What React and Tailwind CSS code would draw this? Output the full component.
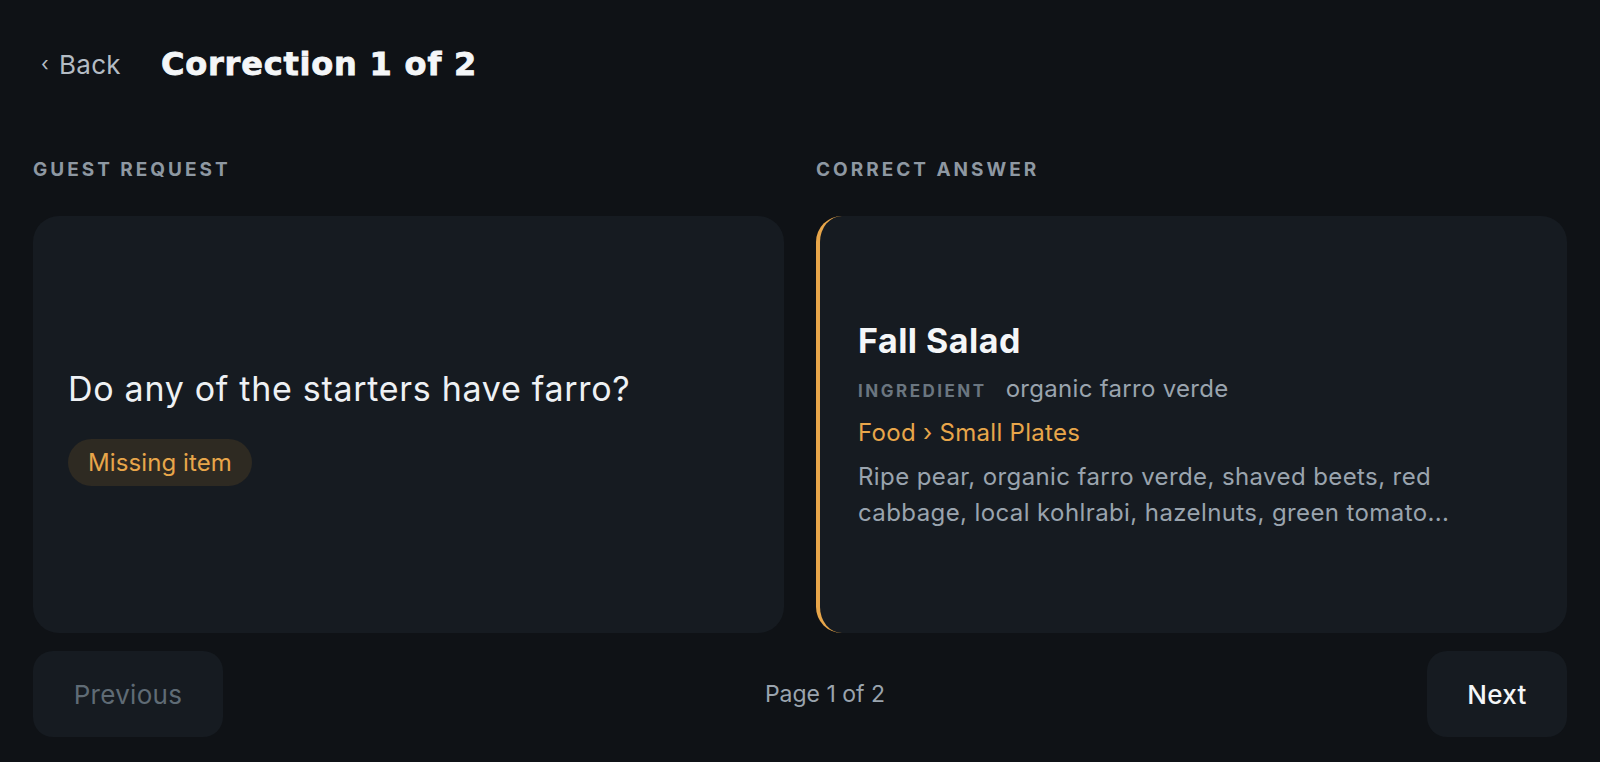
export default function App() {
    return (
        <div className="min-h-screen bg-[#0f1216] text-white px-[33px] pt-[44px] pb-[25px]" style={{ fontFamily: 'Inter, "Noto Sans", sans-serif' }}>
            {/* Header */}
            <div className="flex items-center h-[40px]">
                <button className="text-[#b4bcc4] text-[26px] tracking-[0.3px] flex items-center gap-[10px] ml-[8px]">
                    <span className="text-[20px]">‹</span> Back
                </button>
                <h1 className="ml-[40px] text-[32px] font-bold tracking-[0.8px] text-[#f4f6f8] [-webkit-text-stroke:0.8px_#f4f6f8]" style={{ fontFamily: '"DejaVu Sans", sans-serif' }}>
                    Correction 1 of 2
                </h1>
            </div>

            {/* Columns */}
            <div className="grid grid-cols-2 gap-[32px] mt-[74px]">
                <div>
                    <h2 className="text-[19px] leading-[24px] font-bold tracking-[3px] text-[#8e98a2] uppercase mb-[34px]">Guest Request</h2>
                    <div className="bg-[#161b21] rounded-[26px] h-[417px] px-[35px] pt-[6px] flex flex-col justify-center">
                        <p className="text-[34px] leading-[40px] tracking-[0.7px] text-[#eef1f4]">Do any of the starters have farro?</p>
                        <span className="mt-[30px] self-start px-[20px] py-[10px] rounded-full bg-[#2e2a22] text-[#e8a64a] text-[24px] leading-[27px] tracking-[0.1px]">
                            Missing item
                        </span>
                    </div>
                </div>
                <div>
                    <h2 className="text-[19px] leading-[24px] font-bold tracking-[3px] text-[#8e98a2] uppercase mb-[34px]">Correct Answer</h2>
                    <div className="bg-[#161b21] rounded-[26px] h-[417px] border-l-[4px] border-[#e8a64a] pl-[38px] pr-[40px] pt-[3px] flex flex-col justify-center">
                        <h3 className="text-[34px] font-bold tracking-[0.5px] text-[#f4f6f8] leading-[40px]">Fall Salad</h3>
                        <div className="flex items-baseline gap-[19px] mt-[12px] leading-[32px]">
                            <span className="text-[17px] font-bold tracking-[2.5px] text-[#6b7680]">INGREDIENT</span>
                            <span className="text-[24px] tracking-[0.3px] text-[#9aa4ae]">organic farro verde</span>
                        </div>
                        <p className="text-[24px] leading-[32px] tracking-[0.3px] text-[#e8a64a] mt-[10px]">Food › Small Plates</p>
                        <p className="text-[24px] tracking-[0.4px] text-[#9aa4ae] leading-[36px] mt-[10px] max-w-[620px]">
                            Ripe pear, organic farro verde, shaved beets, red cabbage, local kohlrabi, hazelnuts, green tomato...
                        </p>
                    </div>
                </div>
            </div>

            {/* Pagination */}
            <div className="flex items-center justify-between mt-[18px]">
                <button disabled className="w-[190px] h-[86px] rounded-[20px] bg-[#161b21] text-[#5f6b75] text-[26px] tracking-[0.3px]">
                    Previous
                </button>
                <span className="text-[#9aa4ae] text-[23px]">Page 1 of 2</span>
                <button className="w-[140px] h-[86px] rounded-[20px] bg-[#161b21] text-[#f4f6f8] text-[26px] font-medium tracking-[0.3px]">
                    Next
                </button>
            </div>
        </div>
    )
}
